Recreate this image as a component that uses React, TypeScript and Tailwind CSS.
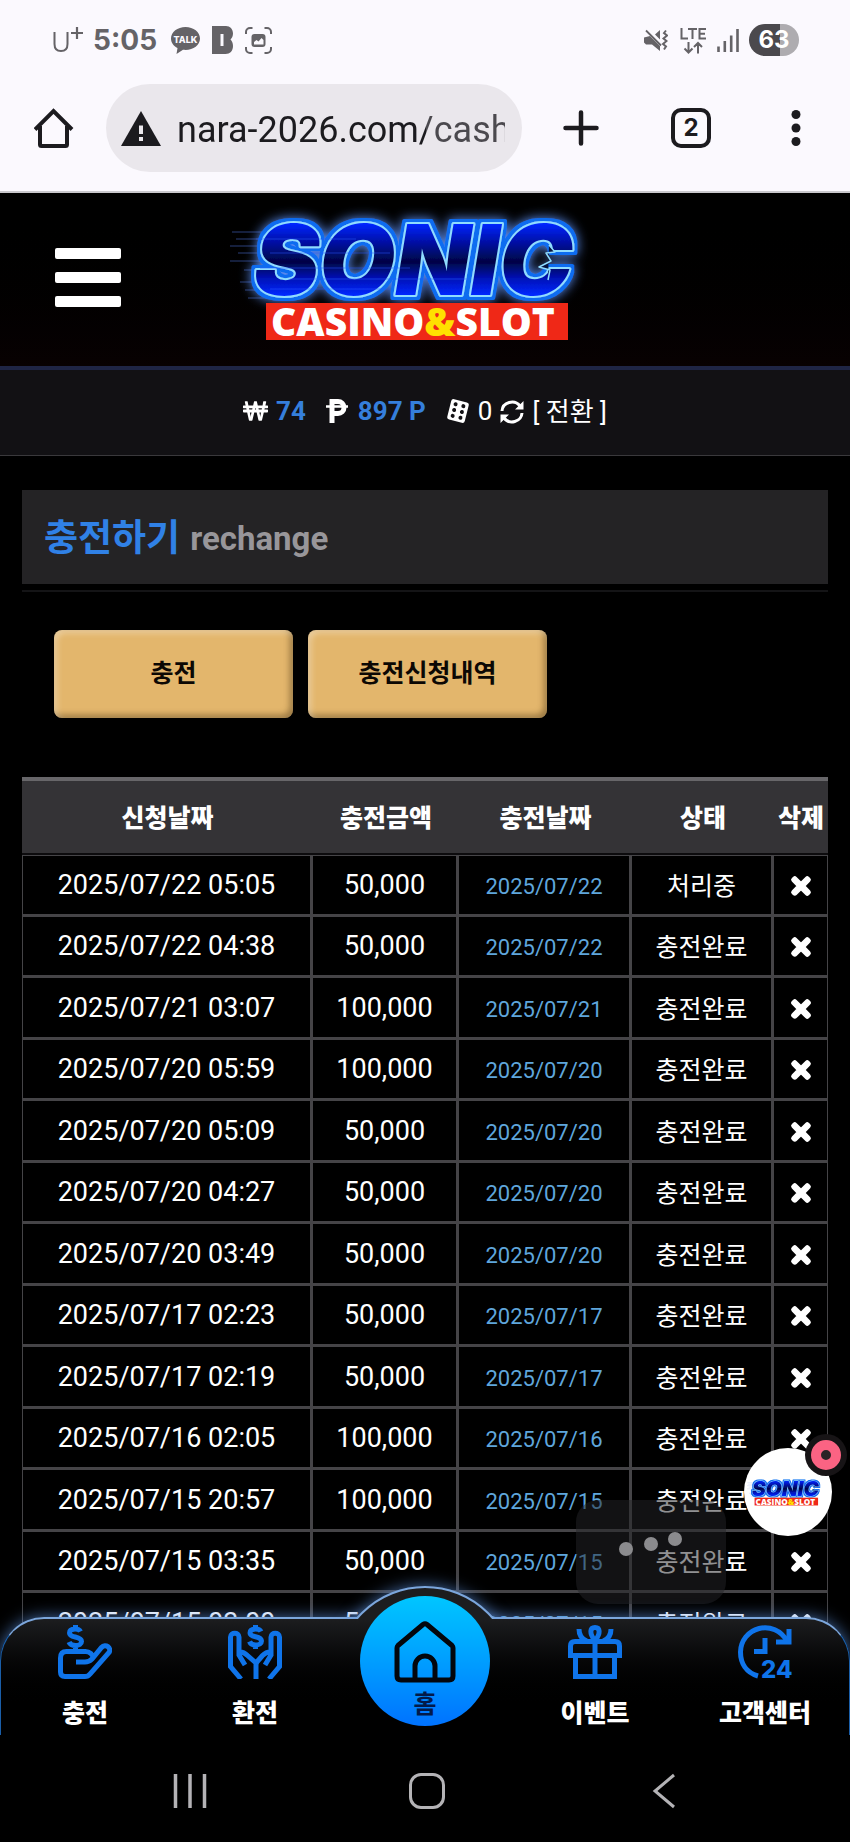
import React from "react";
import clsx from "clsx";
import { FaTimes, FaWonSign } from "react-icons/fa";

interface ChargeRow {
  requestedAt: string;
  amount: string;
  chargedAt: string;
  status: string;
}

const rows: ChargeRow[] = [
  { requestedAt: "2025/07/22 05:05", amount: "50,000", chargedAt: "2025/07/22", status: "처리중" },
  { requestedAt: "2025/07/22 04:38", amount: "50,000", chargedAt: "2025/07/22", status: "충전완료" },
  { requestedAt: "2025/07/21 03:07", amount: "100,000", chargedAt: "2025/07/21", status: "충전완료" },
  { requestedAt: "2025/07/20 05:59", amount: "100,000", chargedAt: "2025/07/20", status: "충전완료" },
  { requestedAt: "2025/07/20 05:09", amount: "50,000", chargedAt: "2025/07/20", status: "충전완료" },
  { requestedAt: "2025/07/20 04:27", amount: "50,000", chargedAt: "2025/07/20", status: "충전완료" },
  { requestedAt: "2025/07/20 03:49", amount: "50,000", chargedAt: "2025/07/20", status: "충전완료" },
  { requestedAt: "2025/07/17 02:23", amount: "50,000", chargedAt: "2025/07/17", status: "충전완료" },
  { requestedAt: "2025/07/17 02:19", amount: "50,000", chargedAt: "2025/07/17", status: "충전완료" },
  { requestedAt: "2025/07/16 02:05", amount: "100,000", chargedAt: "2025/07/16", status: "충전완료" },
  { requestedAt: "2025/07/15 20:57", amount: "100,000", chargedAt: "2025/07/15", status: "충전완료" },
  { requestedAt: "2025/07/15 03:35", amount: "50,000", chargedAt: "2025/07/15", status: "충전완료" },
  { requestedAt: "2025/07/15 03:00", amount: "50,000", chargedAt: "2025/07/15", status: "충전완료" },
];

const columns = [
  { label: "신청날짜", width: "w-auto" },
  { label: "충전금액", width: "w-[146px]" },
  { label: "충전날짜", width: "w-[173px]" },
  { label: "상태", width: "w-[142px]" },
  { label: "삭제", width: "w-[54px]" },
];

const StatusBar: React.FC = () => (
  <div className="flex h-[78px] items-center justify-between pt-0.5 pr-[51px] pl-[53px] text-[#656367]">
    <div className="flex items-center">
      <svg viewBox="0 0 30 26" className="h-[26px] w-[30px]" fill="none" stroke="currentColor">
        <path d="M1.500 5v12c0 4.500 2.500 7 6.500 7s6.500-2.500 6.500-7V5" strokeWidth="2" />
        <path d="M24 0v12M18 6h12" strokeWidth="2.200" />
      </svg>
      <span className="ml-2.5 font-[Inter,sans-serif] text-[28px] leading-8 font-bold">5:05</span>
      <svg viewBox="0 0 29 27" className="ml-3.5 h-[27px] w-[29px]">
        <path
          d="M14.500 0C6.500 0 0 5 0 11.500c0 4 2.500 7.500 6.500 9.500L5.500 27l6.500-4.200c.800.100 1.600.100 2.500.100C22.500 22.900 29 18 29 11.500S22.500 0 14.500 0z"
          fill="currentColor"
        />
        <text
          x="14.500"
          y="15.500"
          textAnchor="middle"
          className="fill-[#fbf9fe] font-[Inter,sans-serif] text-[9px] font-extrabold"
        >
          TALK
        </text>
      </svg>
      <svg viewBox="0 0 21 28" className="ml-3 h-7 w-[21px]">
        <path
          fillRule="evenodd"
          d="M0 0h14c4 0 7 3 7 7.500 0 2.500-1 4.500-2.500 6C20 15 21 17 21 20c0 5-3 8-7.500 8H0zM8.500 8v12h3V8z"
          fill="currentColor"
        />
      </svg>
      <svg viewBox="0 0 27 27" className="ml-3 h-[27px] w-[27px]" fill="none" stroke="currentColor" strokeWidth="2">
        <path d="M1 7V5a4 4 0 0 1 4-4h2.500M19.500 1H22a4 4 0 0 1 4 4v2M26 20v2a4 4 0 0 1-4 4h-2.500M7.500 26H5a4 4 0 0 1-4-4v-2" />
        <rect x="6.500" y="7" width="14" height="13" rx="3" fill="currentColor" stroke="none" />
        <path d="M9 17.500v-2.500l2.500-2 2 1.500 3-3.500 2 2v4.500z" fill="#fbf9fe" stroke="none" />
      </svg>
    </div>
    <div className="flex items-center">
      <svg viewBox="0 0 24 23" className="h-[23px] w-6" fill="none" stroke="currentColor">
        <path d="M0 8.500l6-1.500L16 17v5l-8-6.500H2l-2-2zM16 1v9.500L11 5.500z" fill="currentColor" stroke="none" />
        <path d="M2 1.500l15 15" strokeWidth="1.800" />
        <path d="M22 1.500l-2 2.500 3 2.500-3.500 3 3 2.500-3.500 3 3 2.500-2 3" strokeWidth="2" />
      </svg>
      <svg viewBox="0 0 27 27" className="ml-3 h-[27px] w-[27px]" fill="none" stroke="currentColor" strokeWidth="2">
        <path d="M1.500 1v10.500H8M8 2.100h9M12.500 2.100v10M26 2.100h-6.500v9.400H26M19.500 6.800H25" />
        <path d="M8.500 15v10.500M4.500 21.500l4 4 4-4M18 26.500V16M14 20l4-4 4 4" />
      </svg>
      <svg viewBox="0 0 22 23" className="ml-2.5 h-[23px] w-[22px]" fill="none" stroke="currentColor" strokeWidth="2.600">
        <path d="M1.500 17.500V23M7.800 12v11M14.200 6.500V23M20.500 0v23" />
      </svg>
      <div className="ml-2.5 flex h-8 w-[50px] items-center justify-center rounded-full bg-[linear-gradient(to_right,#4b494d_62%,#aeacb0_62%)] font-[Inter,sans-serif] text-[24px] leading-8 font-bold text-white">
        63
      </div>
    </div>
  </div>
);

const BrowserToolbar: React.FC = () => (
  <div className="flex h-[100px] items-center pr-[49px] pl-[34px] text-[#1c1b1f]">
    <button type="button" aria-label="홈페이지">
      <svg viewBox="0 0 40 40" className="size-10" fill="none" stroke="currentColor" strokeWidth="4">
        <path d="M1 21.500L19.500 3 38 21.500" />
        <path d="M6 18v18.500q0 1.500 1.500 1.500h24q1.500 0 1.500-1.500V18" />
      </svg>
    </button>
    <div className="ml-8 flex h-[88px] min-w-0 flex-1 items-center rounded-full bg-[#eae7ec] pr-[17px] pl-[15px]">
      <svg viewBox="0 0 40 35" className="h-[35px] w-10 shrink-0">
        <path d="M20 0l20 35H0z" fill="currentColor" />
        <path d="M18 14.500h4v8.500h-4zM18 26h4v4h-4z" fill="#eae7ec" />
      </svg>
      <input
        type="text"
        aria-label="주소"
        readOnly
        defaultValue="nara-2026.com/cash"
        className="ml-4 w-full min-w-0 bg-[linear-gradient(to_right,#1c1b1f_76%,#4b494e_76%)] bg-clip-text pt-1 font-[Roboto,sans-serif] text-[36px] leading-[44px] text-transparent outline-none"
      />
    </div>
    <button type="button" aria-label="새 탭" className="ml-[41px]">
      <svg viewBox="0 0 36 36" className="size-9" stroke="currentColor" strokeWidth="4.500" strokeLinecap="round">
        <path d="M18 2.500v31M2.500 18h31" />
      </svg>
    </button>
    <button
      type="button"
      aria-label="탭 2개"
      className="ml-[72px] flex size-10 items-center justify-center rounded-[10px] border-4 border-[#1c1b1f] font-[Inter,sans-serif] text-[24px] leading-8 font-bold"
    >
      2
    </button>
    <button type="button" aria-label="메뉴" className="ml-20">
      <svg viewBox="0 0 10 36" className="h-9 w-2.5" fill="currentColor">
        <circle cx="5" cy="4.500" r="4.500" />
        <circle cx="5" cy="18" r="4.500" />
        <circle cx="5" cy="31.500" r="4.500" />
      </svg>
    </button>
  </div>
);

const Logo: React.FC<{ className?: string; light?: boolean }> = ({ className, light }) => {
  const id = light ? "light" : "dark";
  return (
    <svg viewBox="0 0 390 150" className={className} role="img" aria-label="SONIC CASINO&SLOT">
      <defs>
        <linearGradient id={`fill-${id}`} x1="0" y1="0" x2="0" y2="1">
          <stop offset=".2" stopColor="#0026ff" />
          <stop offset=".35" stopColor="#0010a8" />
          <stop offset=".52" stopColor="#000545" />
          <stop offset=".66" stopColor="#0012b8" />
          <stop offset=".8" stopColor="#0028ff" />
        </linearGradient>
        {/* Blue rim plus a soft halo round the letters */}
        <filter id={`rim-${id}`} x="-10%" y="-40%" width="120%" height="180%">
          <feMorphology in="SourceAlpha" operator="dilate" radius="3" result="fat" />
          <feFlood floodColor="#0a6cf0" />
          <feComposite in2="fat" operator="in" result="rim" />
          <feGaussianBlur in="fat" stdDeviation="6" result="soft" />
          <feFlood floodColor="#5b8ff5" floodOpacity={light ? 0 : 1} />
          <feComposite in2="soft" operator="in" result="halo" />
          <feMerge>
            <feMergeNode in="halo" />
            <feMergeNode in="rim" />
            <feMergeNode in="SourceGraphic" />
          </feMerge>
        </filter>
      </defs>
      <path
        d="M2 31h50M6 38h40M0 45h40M8 52h40M0 60h45M14 69h30M10 81h30M15 89h30M18 97h40"
        stroke={light ? "#7fa0e8" : "#2b3f78"}
        strokeWidth="1"
      />
      <text
        x="24"
        y="94"
        fill={`url(#fill-${id})`}
        stroke="#8fdcff"
        strokeWidth="4"
        strokeLinejoin="round"
        paintOrder="stroke"
        filter={`url(#rim-${id})`}
        className="font-[Inter,sans-serif] text-[98px] font-black italic"
      >
        SONIC
      </text>
      <path
        d="M26 38h100M40 52h120M30 67h150M60 78h180M40 88h120"
        stroke="#2a58ff"
        strokeOpacity=".5"
        strokeWidth="1"
      />
      {/* Quills on the inner edge of the last letter */}
      <path
        d="M319 44l6 7-9 1 5 8-12 6 11 3-2 10"
        fill="#04133f"
        stroke="#8fdcff"
        strokeWidth="1.500"
        strokeLinejoin="round"
      />
      <rect x="36" y="102" width="302" height="37" fill="#ef2817" />
      <text x="41" y="135" className="fill-white font-['Open_Sans',sans-serif] text-[39px] font-extrabold">
        CASINO<tspan fill="#ffe000">&amp;</tspan>SLOT
      </text>
    </svg>
  );
};

const SiteHeader: React.FC = () => (
  <header className="grid h-[177px] grid-cols-[1fr_390px_1fr] items-center border-b-4 border-[#1f2545] bg-linear-to-b from-black to-[#080102] pb-2">
    <button type="button" aria-label="메뉴 열기" className="mt-1 ml-[55px] flex w-[66px] flex-col gap-[13px]">
      <span className="h-[11px] rounded-xs bg-white" />
      <span className="h-[11px] rounded-xs bg-white" />
      <span className="h-[11px] rounded-xs bg-white" />
    </button>
    <Logo className="h-[150px] w-full" />
  </header>
);

const BalanceBar: React.FC = () => (
  <div className="flex h-[86px] items-center justify-center border-b border-[#3a393c] bg-[#121114] pb-1 text-[26px] leading-8 text-white">
    <FaWonSign className="h-6 w-[25px]" />
    <span className="ml-2 font-bold text-[#357fdc]">74</span>
    <svg viewBox="0 0 22 24" className="ml-5 h-6 w-[22px]" fill="none" stroke="currentColor">
      <path d="M6 24V2.500h6a5.500 5.500 0 0 1 0 12H6" strokeWidth="5" />
      <path d="M0 7.500h22" strokeWidth="2.500" />
    </svg>
    <span className="ml-2.5 font-bold text-[#357fdc]">897 P</span>
    <svg viewBox="0 0 24 24" className="ml-5 size-6">
      <g transform="rotate(14 12 12)">
        <rect x="3" y="1.500" width="18" height="21" rx="2.500" fill="currentColor" />
        <g fill="#121114">
          <circle cx="8" cy="6" r="2" />
          <circle cx="16" cy="6" r="2" />
          <circle cx="8" cy="12" r="2" />
          <circle cx="16" cy="12" r="2" />
          <circle cx="8" cy="18" r="2" />
          <circle cx="16" cy="18" r="2" />
        </g>
      </g>
    </svg>
    <span className="ml-2">0</span>
    <button type="button" className="ml-2 flex items-center gap-2 pt-0.5 text-[26px]">
      <svg viewBox="0 0 24 24" className="size-6" fill="none" stroke="currentColor" strokeWidth="3">
        <path d="M2 11a10 9.500 0 0 1 18-5M22 13a10 9.500 0 0 1-18 5" />
        <path d="M23.500 1v8.500H15zM.500 23v-8.500H9z" fill="currentColor" stroke="none" />
      </svg>
      <span>[ 전환 ]</span>
    </button>
  </div>
);

const ChargeTable: React.FC = () => (
  <table className="mt-[59px] w-full table-fixed border-separate border-spacing-0 text-center text-white">
    <thead>
      <tr className="h-[78px]">
        {columns.map((column) => (
          <th
            key={column.label}
            className={clsx(
              column.width,
              "border-t-4 border-b-2 border-t-[#676669] border-b-[#0c0b0d] bg-[#343336] px-0 pt-1 pb-0 text-[25px] leading-8 font-black whitespace-nowrap"
            )}
          >
            {column.label}
          </th>
        ))}
      </tr>
    </thead>
    <tbody className="[&_td]:border-r-3 [&_td]:border-b-3 [&_td]:border-[#454447] [&_td]:p-0 [&_td:first-child]:border-l [&_td:last-child]:border-r [&_tr:first-child_td]:border-t">
      {rows.map((row) => (
        <tr key={row.requestedAt} className="odd:h-[62px] even:h-[61px]">
          <td className="text-[27px] leading-8">{row.requestedAt}</td>
          <td className="text-[27px] leading-8">{row.amount}</td>
          <td>
            <span className="block pt-1 text-[22px] leading-8 text-[#5fa6dc]">{row.chargedAt}</span>
          </td>
          <td>
            <span className="block pt-1 text-[25px] leading-8">{row.status}</span>
          </td>
          <td>
            <button type="button" aria-label="삭제" className="flex w-full justify-center pt-0.5">
              <FaTimes className="size-[26px]" stroke="currentColor" strokeWidth="36" />
            </button>
          </td>
        </tr>
      ))}
    </tbody>
  </table>
);

const DepositIcon = () => (
  <>
    <path d="M22.500 6.500C21.500 4.500 19.500 4 17 4c-3.500 0-5.500 1.500-5.500 4 0 5.500 12 2.500 12 8.500 0 2.500-2.500 4-6 4-3 0-5.500-1-6.500-3.500M17.500 0v4M17.500 20v7" />
    <path d="M18 37h9c3 0 5-1 7-3l9.500-11.500c4-4.500 10.500.500 7.500 5L32 49c-1.500 2-2.500 2.500-5 2.500H7c-3 0-4.500-1.500-4.500-4.500V33c0-4 2-6.500 6-6.500h19c4 0 7.500 3 7.500 6.500" />
  </>
);

const WithdrawIcon = () => (
  <>
    <path d="M33 6.500C32 4.500 30 4 27.500 4c-3.500 0-5.500 1.500-5.500 4 0 5 11.500 2.500 11.500 8 0 2.500-2.500 4-6 4-3 0-5-1-6-3.500M27.500 0v4M27.500 20v4" />
    <path d="M13 54L2.500 41.500V12c0-5 8.500-5 8.500 0v18l6 10M12 27c3 0 5 1 7.500 3.500L28 38v16" />
    <path d="M41 54l10.500-12.500V12c0-5-8.500-5-8.500 0v18l-6 10M42 27c-3 0-5 1-7.500 3.500L28 38" />
  </>
);

const GiftIcon = () => (
  <>
    <path d="M2.500 30.500V21c0-3 1.500-4.500 4.500-4.500h40c3 0 4.500 1.500 4.500 4.500v9.500zM7.500 31v20.500h39V31M27 17v34" />
    <path d="M27 16c-6-8-5-13.500 0-13.500S33 8 27 16zM11 4c0 6 2 10 8 12M43 4c0 6-2 10-8 12" />
  </>
);

const SupportIcon = () => (
  <>
    <path d="M20 51C8 47.500 2.500 38 2.500 27a24.500 24.500 0 0 1 46-11.500" />
    <path d="M51 4v13H38M27 13v13.500H16" />
    <text
      x="23"
      y="53"
      fill="currentColor"
      stroke="none"
      className="font-[Inter,sans-serif] text-[24px] font-extrabold"
    >
      24
    </text>
  </>
);

const NavItem: React.FC<{ label: string; children: React.ReactNode }> = ({ label, children }) => (
  <a href="#" className="flex flex-col items-center gap-[19px] pt-2">
    <svg viewBox="0 0 54 54" className="size-[54px] text-[#0f74ea]" fill="none" stroke="currentColor" strokeWidth="5">
      {children}
    </svg>
    <span className="text-[25px] leading-8 font-black text-white">{label}</span>
  </a>
);

const BottomNav: React.FC = () => (
  <nav className="absolute inset-x-0 bottom-0 h-[118px]">
    <div className="absolute inset-0 rounded-t-[44px] border-x border-t-2 border-x-[#1a5ea8] border-t-[#7ba6dc] bg-linear-to-b from-[#1c1d1f] to-black to-80% shadow-[0_0_16px_rgba(96,150,230,0.7)]" />
    {/* Raised arc behind the home button */}
    <div className="absolute inset-x-0 -top-[51px] h-[53px] overflow-hidden">
      <div className="mx-auto mt-5 size-[180px] rounded-full border-2 border-[#7ba6dc] bg-[#1c1d1f] shadow-[0_0_16px_rgba(96,150,230,0.7)]" />
    </div>
    <div className="relative grid grid-cols-5">
      <NavItem label="충전">
        <DepositIcon />
      </NavItem>
      <NavItem label="환전">
        <WithdrawIcon />
      </NavItem>
      <div className="relative">
        <a
          href="#"
          className="absolute -top-[21px] left-1/2 flex size-[130px] -translate-x-1/2 flex-col items-center gap-1.5 rounded-full bg-linear-to-b from-[#00c6ff] to-[#0072ff] pt-[25px]"
        >
          <svg viewBox="0 0 62 62" className="size-[62px]" fill="none" stroke="#03060c" strokeWidth="5">
            <path
              d="M3 27q0-1.500 1-2.500L29 3.500q2-1.500 4 0l25 21q1 1 1 2.500v28q0 4-4 4H7q-4 0-4-4z"
              strokeLinejoin="round"
            />
            <path d="M21 59V45a10 10 0 0 1 20 0v14" />
          </svg>
          <span className="text-[25px] leading-8 font-bold text-[#031a4a]">홈</span>
        </a>
      </div>
      <NavItem label="이벤트">
        <GiftIcon />
      </NavItem>
      <NavItem label="고객센터">
        <SupportIcon />
      </NavItem>
    </div>
  </nav>
);

const FloatingWidget: React.FC = () => (
  <div className="absolute right-[18px] bottom-[199px]">
    <button
      type="button"
      aria-label="SONIC CASINO&SLOT"
      className="flex size-[88px] items-center justify-center rounded-full bg-white"
    >
      <Logo light className="h-8 w-[82px]" />
    </button>
    <span className="absolute -top-[14px] -right-[15px] flex size-[42px] items-center justify-center rounded-full bg-[#171416]">
      <span className="size-[30px] rounded-full border-10 border-[#fb6383] bg-[#2a2325]" />
    </span>
  </div>
);

const LoadingDots: React.FC = () => (
  <div className="absolute right-[124px] bottom-[131px] flex h-[104px] w-[150px] items-center justify-center rounded-[22px] bg-[#232328]/50 pb-4">
    <svg viewBox="0 0 66 26" className="h-[26px] w-[66px]" fill="#8b8b8e">
      <circle cx="8" cy="18" r="7" />
      <circle cx="33" cy="13" r="7" />
      <circle cx="57" cy="8" r="7" />
    </svg>
  </div>
);

const SystemNav: React.FC = () => (
  <div className="grid h-[107px] grid-cols-3 items-center justify-items-center bg-black pt-1 pr-[68px] pl-[72px] text-[#b4b3b6]">
    <button type="button" aria-label="최근 앱">
      <svg viewBox="0 0 34 36" className="h-9 w-[34px]" stroke="currentColor" strokeWidth="3.500">
        <path d="M2.500 1v34M17 1v34M31.500 1v34" />
      </svg>
    </button>
    <button type="button" aria-label="홈 화면" className="size-9 rounded-[12px] border-3 border-current" />
    <button type="button" aria-label="뒤로">
      <svg viewBox="0 0 24 36" className="h-9 w-6" fill="none" stroke="currentColor" strokeWidth="3">
        <path d="M22 2L3 18l19 16" />
      </svg>
    </button>
  </div>
);

export default function App() {
  return (
    <div className="flex h-screen flex-col overflow-hidden bg-black font-[Roboto,'Noto_Sans_CJK_KR',sans-serif]">
      <div className="h-[193px] shrink-0 border-b-2 border-[#c9c8cc] bg-[#fbf9fe]">
        <StatusBar />
        <BrowserToolbar />
      </div>

      <div className="relative min-h-0 flex-1 overflow-hidden">
        <SiteHeader />
        <BalanceBar />

        <main className="px-[22px] pt-[34px]">
          <h1 className="flex h-[94px] items-center gap-2.5 bg-[#242325] px-[22px] pt-1 text-[37px] leading-[44px] font-bold text-[#3081e6]">
            충전하기
            <span className="text-[33px] font-bold text-[#98969a]">rechange</span>
          </h1>
          <hr className="mt-1.5 border-t-2 border-[#141416]" />

          <div className="mt-[38px] flex gap-[15px] px-8">
            {["충전", "충전신청내역"].map((label) => (
              <button
                key={label}
                type="button"
                className="h-[88px] w-[239px] rounded-lg bg-[#e3b66c] text-[25px] leading-8 font-bold text-[#0c0804] shadow-[inset_3px_3px_6px_rgba(255,255,255,0.35),inset_-3px_-3px_6px_rgba(60,40,10,0.45)]"
              >
                {label}
              </button>
            ))}
          </div>

          <ChargeTable />
        </main>

        <LoadingDots />
        <FloatingWidget />
        <BottomNav />
      </div>

      <SystemNav />
    </div>
  );
}
